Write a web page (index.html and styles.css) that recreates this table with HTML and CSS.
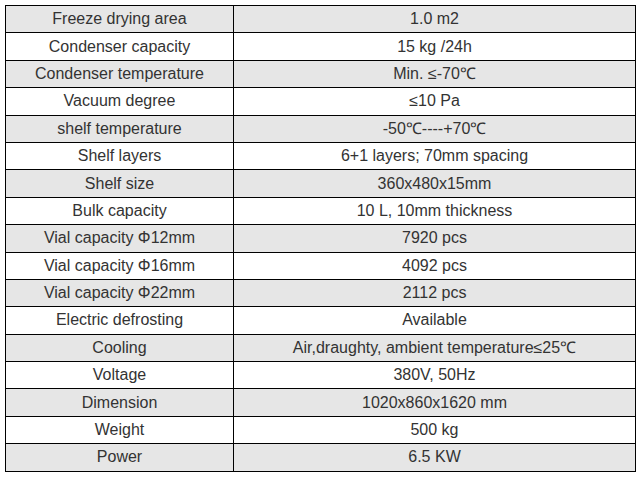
FILE: index.html
```html
<!DOCTYPE html>
<html>
<head>
<meta charset="utf-8">
<link rel="stylesheet" href="styles.css">
</head>
<body>
<table class="spec">
<colgroup><col class="c1"><col class="c2"></colgroup>
<tbody>
<tr><td>Freeze drying area</td><td>1.0 m2</td></tr>
<tr><td>Condenser capacity</td><td>15 kg /24h</td></tr>
<tr><td>Condenser temperature</td><td>Min. ≤-70℃</td></tr>
<tr><td>Vacuum degree</td><td>≤10 Pa</td></tr>
<tr><td>shelf temperature</td><td>-50℃----+70℃</td></tr>
<tr><td>Shelf layers</td><td>6+1 layers; 70mm spacing</td></tr>
<tr><td>Shelf size</td><td>360x480x15mm</td></tr>
<tr><td>Bulk capacity</td><td>10 L, 10mm thickness</td></tr>
<tr><td>Vial capacity Φ12mm</td><td>7920 pcs</td></tr>
<tr><td>Vial capacity Φ16mm</td><td>4092 pcs</td></tr>
<tr><td>Vial capacity Φ22mm</td><td>2112 pcs</td></tr>
<tr><td>Electric defrosting</td><td>Available</td></tr>
<tr><td>Cooling</td><td>Air,draughty, ambient temperature≤25℃</td></tr>
<tr><td>Voltage</td><td>380V, 50Hz</td></tr>
<tr><td>Dimension</td><td>1020x860x1620 mm</td></tr>
<tr><td>Weight</td><td>500 kg</td></tr>
<tr><td>Power</td><td>6.5 KW</td></tr>
</tbody>
</table>
</body>
</html>
```
FILE: styles.css
```css
html, body {
  margin: 0;
  padding: 0;
  background: #ffffff;
}
body {
  padding: 5px;
  font-family: "Liberation Sans", Arial, sans-serif;
}
.spec {
  border-collapse: collapse;
  width: 630px;
  table-layout: fixed;
  color: #333333;
  font-size: 16px;
}
.c1 { width: 228px; }
.c2 { width: 402px; }
.spec td {
  border: 1px solid #000000;
  text-align: center;
  padding: 0;
  height: 26.4px;
  line-height: 18px;
  white-space: nowrap;
}
.spec tr:nth-child(odd) td {
  background: #e6e6e6;
}
.spec tr:nth-child(even) td {
  background: #ffffff;
}
```
